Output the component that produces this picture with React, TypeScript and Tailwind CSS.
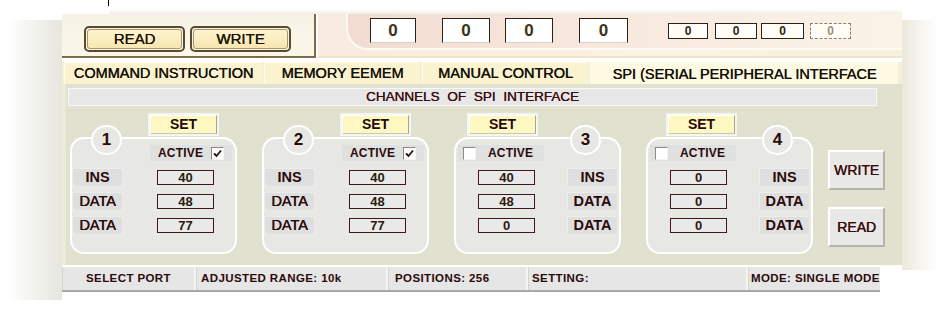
import React from "react";

type Channel = {
  id: number;
  active: boolean;
  values: string[];
  mirror: boolean;
};

const channels: Channel[] = [
  { id: 1, active: true, values: ["40", "48", "77"], mirror: false },
  { id: 2, active: true, values: ["40", "48", "77"], mirror: false },
  { id: 3, active: false, values: ["40", "48", "0"], mirror: true },
  { id: 4, active: false, values: ["0", "0", "0"], mirror: true },
];

const labels = ["INS", "DATA", "DATA"];

const CheckBox = ({ checked }: { checked: boolean }) => (
  <div className="w-[13px] h-[13px] bg-white border border-t-[#8a8a80] border-l-[#8a8a80] border-r-[#f4f4f0] border-b-[#f4f4f0] flex items-center justify-center">
    {checked && (
      <svg width="9" height="9" viewBox="0 0 9 9">
        <path d="M1 4.5 L3.5 7 L8 1.5" stroke="#2a1010" strokeWidth="1.8" fill="none" />
      </svg>
    )}
  </div>
);

const ChannelGroup = ({ ch }: { ch: Channel }) => {
  const m = ch.mirror;
  return (
    <div className="relative w-[167px] shrink-0">
      {/* SET button row */}
      <div className={`flex h-[19px] ${m ? (ch.id === 3 ? "pl-[15px]" : "pl-[22px]") : "pl-[80px]"}`}>
        <div className="w-[67px] h-[19px] bg-[#fdf8c2] border border-t-white border-l-white border-r-[#a8a890] border-b-[#c8c8b0] flex items-center justify-center text-[14px] font-bold text-[#2a0a0a] outline-2 outline-[#f6f6f0]">
          SET
        </div>
      </div>
      {/* frame */}
      <div className="mt-[3px] h-[117px] rounded-[14px] border-2 border-white bg-[#e7e7e3] pt-[6px]">
        <div className={`flex ${m ? "pl-[2px]" : "pl-[78px]"}`}>
          <div
            className={`h-[16px] bg-[#e0e0e0] flex items-center ${
              m ? "w-[86px] pl-[5px] gap-[12px]" : "w-[82px] pl-[8px] gap-[8px]"
            }`}
          >
            {m && <CheckBox checked={ch.active} />}
            <span className="text-[12px] font-bold text-[#2a0a0a] tracking-[0.2px]">ACTIVE</span>
            {!m && <CheckBox checked={ch.active} />}
          </div>
        </div>
        <div className="mt-[7px] flex flex-col gap-[5px]">
          {labels.map((lbl, i) => {
            const label = (
              <div
                className={`w-[51px] h-[19px] bg-[#dfdfdf] border border-[#ececea] flex items-center justify-center text-[14.5px] text-[#2a0a0a] ${
                  i === 0 || m ? "font-bold" : "font-normal [text-shadow:0.4px_0_0_#2a0a0a]"
                }`}
              >
                {lbl}
              </div>
            );
            const value = (
              <div className="w-[57px] h-[15px] bg-[#e9e9e9] border border-[#3a1a1a] flex items-center justify-center text-[13px] font-bold text-[#2a1a0a]">
                {ch.values[i]}
              </div>
            );
            return m ? (
              <div key={i} className="flex items-center pl-[22px] h-[19px]">
                {value}
                <div className="w-[32px]" />
                {label}
              </div>
            ) : (
              <div key={i} className="flex items-center h-[19px]">
                {label}
                <div className="w-[34px]" />
                {value}
              </div>
            );
          })}
        </div>
      </div>
      {/* number badge */}
      <div
        className={`absolute top-[10px] ${
          m ? "left-[116px]" : "left-[21px]"
        } w-[31px] h-[30px] rounded-full bg-[#e7e7e3] border-2 border-white flex items-center justify-center text-[17px] font-bold text-[#2a0a0a]`}
      >
        {ch.id}
      </div>
    </div>
  );
};

const bigBoxes = [
  { ml: "ml-[22px]", w: "w-[46px]" },
  { ml: "ml-[26px]", w: "w-[48px]" },
  { ml: "ml-[15px]", w: "w-[48px]" },
  { ml: "ml-[26px]", w: "w-[49px]" },
];

const smallBoxes = [
  { ml: "ml-[40px]", w: "w-[40px]", dotted: false },
  { ml: "ml-[7px]", w: "w-[42px]", dotted: false },
  { ml: "ml-[4px]", w: "w-[43px]", dotted: false },
  { ml: "ml-[6px]", w: "w-[41px]", dotted: true },
];

const statusCells = [
  { text: "SELECT PORT", w: "w-[132px]", align: "justify-center" },
  { text: "ADJUSTED RANGE: 10k", w: "w-[190px]", align: "justify-start pl-[4px]" },
  { text: "POSITIONS: 256", w: "w-[138px]", align: "justify-start pl-[6px]" },
  { text: "SETTING:", w: "w-[218px]", align: "justify-start pl-[3px]" },
  { text: "MODE: SINGLE MODE", w: "w-[132px]", align: "justify-start pl-[2px]" },
];

const tabs = [
  { text: "COMMAND INSTRUCTION", w: "w-[198px]", selected: false },
  { text: "MEMORY EEMEM", w: "w-[156px]", selected: false },
  { text: "MANUAL CONTROL", w: "w-[166px]", selected: false },
  { text: "SPI (SERIAL PERIPHERAL INTERFACE", w: "w-[308px]", selected: true },
];

export default function App() {
  return (
    <div className="w-[947px] h-[319px] bg-white overflow-hidden flex font-['Liberation_Sans',Arial,sans-serif]">
      {/* left faded edge */}
      <div className="w-[62px] shrink-0 pt-[20px]">
        <div className="h-[280px] bg-[linear-gradient(to_right,#ffffff_10%,#e6e6de)]" />
      </div>

      {/* main window */}
      <div className="w-[840px] shrink-0 flex flex-col">
        <div className="h-[14px] flex">
          <div className="ml-[46px] w-px h-[6px] bg-black" />
          <div className="flex-1 mt-[9px] h-[5px] bg-[linear-gradient(to_bottom,#ffffff,#efefe6)]" />
        </div>

        {/* top row */}
        <div className="h-[44px] flex gap-[2px]">
          <div className="w-[254px] bg-[linear-gradient(to_bottom,#f6f2e6,#fbf7e8)] border-r-2 border-b-2 border-[#7d6a4c] flex pt-[12px] pl-[22px] gap-[5px]">
            {["READ", "WRITE"].map((t) => (
              <div
                key={t}
                className="w-[101px] h-[26px] rounded-[5px] border-2 border-[#5a4a30] p-[1px]"
              >
                <div className="w-full h-full rounded-[3px] border border-[#a89670] bg-[linear-gradient(to_bottom,#fdf4cf,#f8e6b0)] flex items-center justify-center text-[15px] text-[#1c1408] [text-shadow:0.3px_0_0_#1c1408]">
                  {t}
                </div>
              </div>
            ))}
          </div>
          <div className="flex-1 bg-[linear-gradient(to_right,#f8eadf,#fbf3e4_60%,#f6f1dc)] border-b-2 border-[#efe6c8]">
            <div className="ml-[28px] h-[36px] rounded-bl-[22px] border-l-2 border-b-2 border-[#fffaf2] bg-[linear-gradient(to_right,#f2dcd2,#f8e9de_50%,#faf3e6)] flex">
              {bigBoxes.map((b, i) => (
                <div
                  key={i}
                  className={`${b.ml} ${b.w} mt-[4px] h-[25px] bg-white border border-[#2a2218] border-b-[#d8d0c0] flex items-center justify-center text-[17px] font-bold text-[#3a3414]`}
                >
                  0
                </div>
              ))}
              {smallBoxes.map((b, i) => (
                <div
                  key={i}
                  className={`${b.ml} ${b.w} mt-[9px] h-[16px] bg-[#fffdf6] border ${
                    b.dotted ? "border-dashed border-[#8a8070] text-[#9a9080]" : "border-[#2a2218] text-[#2a2414]"
                  } flex items-center justify-center text-[12px] font-bold`}
                >
                  0
                </div>
              ))}
            </div>
          </div>
        </div>

        {/* tabs */}
        <div className="mt-[4px] h-[22px] flex gap-[2px] pl-[2px] bg-[#f3efd8]">
          {tabs.map((t) => (
            <div
              key={t.text}
              className={`${t.w} h-[22px] flex justify-center whitespace-nowrap border-t border-l border-[#fffbe8] text-[14.5px] text-[#141008] [text-shadow:0.4px_0_0_#141008] ${
                t.selected ? "bg-[#fdf9e2] items-start pt-[1px]" : "bg-[#fbf3d0] items-center"
              }`}
            >
              {t.text}
            </div>
          ))}
        </div>

        {/* panel body */}
        <div className="h-[181px] bg-[#e1e1cf] border-l-4 border-[#ecebd6] pl-[2px] pt-[4px]">
          <div className="w-[809px] h-[18px] bg-[#e7e7e7] border border-[#f8f8f6] flex items-center justify-center text-[13.5px] text-[#3a0c0c] [word-spacing:4px] [text-shadow:0.3px_0_0_#3a0c0c]">
            CHANNELS OF SPI INTERFACE
          </div>
          <div className="mt-[9px] ml-[2px] flex">
            <div className="flex gap-[25px]">
              {channels.map((ch) => (
                <ChannelGroup key={ch.id} ch={ch} />
              ))}
            </div>
            <div className="ml-[15px] mt-[35px] flex flex-col gap-[17px]">
              {["WRITE", "READ"].map((t) => (
                <div
                  key={t}
                  className="w-[57px] h-[40px] bg-[#e8e8e6] border-2 border-t-white border-l-white border-r-[#b4b4aa] border-b-[#b4b4aa] flex items-center justify-center text-[14px] text-[#3a0c0c] [text-shadow:0.4px_0_0_#3a0c0c]"
                >
                  {t}
                </div>
              ))}
            </div>
          </div>
        </div>

        {/* status bar */}
        <div className="mt-[2px] w-[818px] h-[25px] flex gap-[2px] bg-[#f4f4f2] border-b-2 border-[#a8a8a8]">
          {statusCells.map((c) => (
            <div
              key={c.text}
              className={`${c.w} h-full bg-[#e6e6e6] border-l border-[#d4d4d0] flex items-center whitespace-nowrap overflow-hidden ${c.align} text-[11.5px] font-bold tracking-[0.4px] text-[#2c0a0a]`}
            >
              {c.text}
            </div>
          ))}
        </div>
      </div>

      {/* right faded edge */}
      <div className="flex-1 pt-[20px]">
        <div className="h-[250px] bg-[linear-gradient(to_left,#ffffff_20%,#ebe9dc)]" />
      </div>
    </div>
  );
}
